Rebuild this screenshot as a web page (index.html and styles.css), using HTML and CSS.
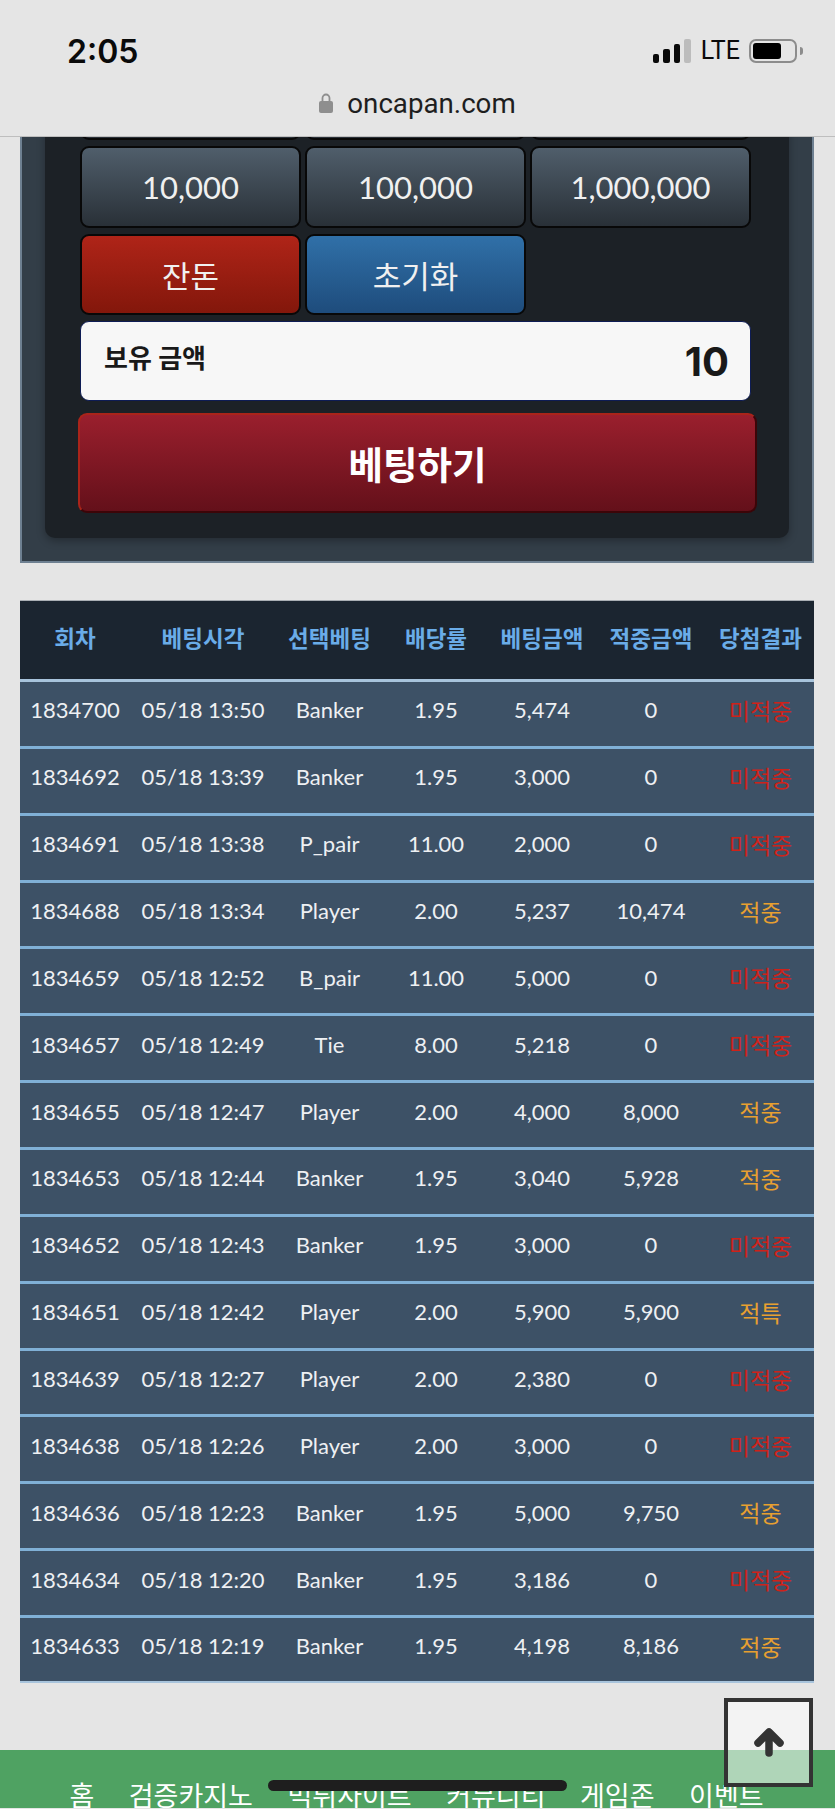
FILE: index.html
```html
<!DOCTYPE html>
<html lang="ko">

<head>
    <meta charset="UTF-8">
    <meta name="viewport" content="width=device-width, initial-scale=1.0">
    <title>oncapan.com</title>
    <link rel="stylesheet" href="styles.css">
</head>

<body>
    <header class="topbar">
        <div class="status">
            <span class="clock">2:05</span>
            <div class="status-right">
                <div class="signal">
                    <i class="bar-1"></i>
                    <i class="bar-2"></i>
                    <i class="bar-3"></i>
                    <i class="bar-4"></i>
                </div>
                <span class="lte">LTE</span>
                <div class="battery"><i></i></div>
                <div class="battery-nub"></div>
            </div>
        </div>
        <div class="address">
            <svg class="lock" viewBox="0 0 14 20" width="14" height="20">
                <path d="M3.5 9V5a3.5 3.5 0 0 1 7 0v4" fill="none" stroke="#8e8e8e" stroke-width="1.8" />
                <rect x="0" y="8" width="14" height="12" rx="2" fill="#8e8e8e" />
            </svg>
            <span>oncapan.com</span>
        </div>
    </header>

    <main class="page">
        <section class="bet-panel">
            <div class="bet-inner">
                <div class="amounts">
                    <button class="btn"></button>
                    <button class="btn"></button>
                    <button class="btn"></button>
                    <button class="btn">10,000</button>
                    <button class="btn">100,000</button>
                    <button class="btn">1,000,000</button>
                    <button class="btn btn-red">잔돈</button>
                    <button class="btn btn-blue">초기화</button>
                </div>
                <div class="balance">
                    <span class="balance-label">보유 금액</span>
                    <span class="balance-value">10</span>
                </div>
                <button class="bet-submit">베팅하기</button>
            </div>
        </section>

        <table class="history">
            <colgroup>
                <col class="c1">
                <col class="c2">
                <col class="c3">
                <col class="c4">
                <col class="c5">
                <col class="c6">
                <col class="c7">
            </colgroup>
            <thead>
                <tr>
                    <th>회차</th>
                    <th>베팅시각</th>
                    <th>선택베팅</th>
                    <th>배당률</th>
                    <th>베팅금액</th>
                    <th>적중금액</th>
                    <th>당첨결과</th>
                </tr>
            </thead>
            <tbody>
                <tr><td>1834700</td><td>05/18 13:50</td><td>Banker</td><td>1.95</td><td>5,474</td><td>0</td><td class="lose">미적중</td></tr>
                <tr><td>1834692</td><td>05/18 13:39</td><td>Banker</td><td>1.95</td><td>3,000</td><td>0</td><td class="lose">미적중</td></tr>
                <tr><td>1834691</td><td>05/18 13:38</td><td>P_pair</td><td>11.00</td><td>2,000</td><td>0</td><td class="lose">미적중</td></tr>
                <tr><td>1834688</td><td>05/18 13:34</td><td>Player</td><td>2.00</td><td>5,237</td><td>10,474</td><td class="win">적중</td></tr>
                <tr><td>1834659</td><td>05/18 12:52</td><td>B_pair</td><td>11.00</td><td>5,000</td><td>0</td><td class="lose">미적중</td></tr>
                <tr><td>1834657</td><td>05/18 12:49</td><td>Tie</td><td>8.00</td><td>5,218</td><td>0</td><td class="lose">미적중</td></tr>
                <tr><td>1834655</td><td>05/18 12:47</td><td>Player</td><td>2.00</td><td>4,000</td><td>8,000</td><td class="win">적중</td></tr>
                <tr><td>1834653</td><td>05/18 12:44</td><td>Banker</td><td>1.95</td><td>3,040</td><td>5,928</td><td class="win">적중</td></tr>
                <tr><td>1834652</td><td>05/18 12:43</td><td>Banker</td><td>1.95</td><td>3,000</td><td>0</td><td class="lose">미적중</td></tr>
                <tr><td>1834651</td><td>05/18 12:42</td><td>Player</td><td>2.00</td><td>5,900</td><td>5,900</td><td class="win">적특</td></tr>
                <tr><td>1834639</td><td>05/18 12:27</td><td>Player</td><td>2.00</td><td>2,380</td><td>0</td><td class="lose">미적중</td></tr>
                <tr><td>1834638</td><td>05/18 12:26</td><td>Player</td><td>2.00</td><td>3,000</td><td>0</td><td class="lose">미적중</td></tr>
                <tr><td>1834636</td><td>05/18 12:23</td><td>Banker</td><td>1.95</td><td>5,000</td><td>9,750</td><td class="win">적중</td></tr>
                <tr><td>1834634</td><td>05/18 12:20</td><td>Banker</td><td>1.95</td><td>3,186</td><td>0</td><td class="lose">미적중</td></tr>
                <tr><td>1834633</td><td>05/18 12:19</td><td>Banker</td><td>1.95</td><td>4,198</td><td>8,186</td><td class="win">적중</td></tr>
            </tbody>
        </table>
    </main>

    <footer class="site-footer">
        <a>홈</a>
        <a>검증카지노</a>
        <a>먹튀사이트</a>
        <a>커뮤니티</a>
        <a>게임존</a>
        <a>이벤트</a>
    </footer>

    <a class="to-top">
        <svg viewBox="0 0 30 30" width="30" height="30">
            <path d="M15 25V5M4 15L15 4L26 15" fill="none" stroke="#333" stroke-width="7.5" stroke-linecap="round" stroke-linejoin="round" />
        </svg>
    </a>
    <div class="home-indicator"></div>
</body>

</html>
```

FILE: styles.css
```css
* {
    box-sizing: border-box;
}

html,
body {
    height: 1809px;
    overflow: hidden;
}

body {
    margin: 0;
    background: rgb(229, 229, 229);
    color: rgb(255, 255, 255);
    font-family: Lato, 'Noto Sans CJK KR', sans-serif;
    display: flex;
    flex-direction: column;
}

/* browser chrome on top of the scrolled page */
.topbar {
    position: fixed;
    top: 0;
    left: 0;
    right: 0;
    height: 137px;
    background: rgb(229, 229, 229);
    border-bottom: 1px solid rgb(190, 190, 190);
    color: rgb(10, 10, 10);
    z-index: 5;
}

.status {
    height: 77px;
    padding: 31px 32px 0 67px;
    display: flex;
    justify-content: space-between;
    align-items: flex-start;
}

.clock {
    font-family: Inter, sans-serif;
    font-size: 32px;
    font-weight: 600;
    line-height: 42px;
}

.status-right {
    display: flex;
    align-items: flex-end;
    padding-top: 8px;
    height: 32px;
}

.signal {
    display: flex;
    align-items: flex-end;
    gap: 4px;
    margin-right: 10px;
}

.signal i {
    display: block;
    width: 6.5px;
    border-radius: 2px;
    background: rgb(10, 10, 10);
}

.signal .bar-1 {
    height: 9px;
}

.signal .bar-2 {
    height: 14px;
}

.signal .bar-3 {
    height: 19px;
}

.signal .bar-4 {
    height: 24px;
    background: rgb(188, 188, 188);
}

.lte {
    font-family: Roboto, sans-serif;
    font-size: 25px;
    line-height: 24px;
    margin-right: 9px;
}

.battery {
    width: 48px;
    height: 24px;
    border: 2px solid rgb(140, 140, 140);
    border-radius: 7px;
    padding: 2px;
}

.battery i {
    display: block;
    width: 28px;
    height: 16px;
    border-radius: 3px;
    background: rgb(0, 0, 0);
}

.battery-nub {
    width: 3px;
    height: 8px;
    margin: 0 0 8px 3px;
    background: rgb(140, 140, 140);
    border-radius: 0 3px 3px 0;
}

.address {
    display: flex;
    justify-content: center;
    align-items: center;
    gap: 14px;
    height: 52px;
    font-family: Roboto, sans-serif;
    font-size: 27.7px;
    color: rgb(30, 30, 30);
}

.page {
    padding: 0 21px 0 20px;
    flex: none;
}

.bet-panel {
    background: rgb(51, 62, 72);
    border-bottom: 2px solid rgb(110, 128, 145);
    border-right: 2px solid rgb(110, 128, 145);
    border-left: 2px solid rgb(110, 128, 145);
    padding: 0 23px 23px 23px;
}

.bet-inner {
    background: rgb(28, 33, 38);
    border-radius: 0 0 10px 10px;
    box-shadow: 0 3px 8px rgba(0, 0, 0, 0.3);
    padding: 58.5px 38px 25px 35px;
}

.amounts {
    display: grid;
    grid-template-columns: repeat(3, 1fr);
    grid-auto-rows: 81.5px;
    gap: 6px 4px;
}

.btn {
    font-family: inherit;
    font-size: 31px;
    font-weight: 400;
    color: rgb(240, 240, 240);
    border: 2px solid rgb(8, 8, 8);
    border-radius: 9px;
    background: linear-gradient(rgb(80, 94, 107), rgb(41, 48, 55));
    padding: 0;
}

.btn-red {
    background: linear-gradient(rgb(175, 36, 24), rgb(131, 23, 11));
}

.btn-blue {
    background: linear-gradient(rgb(48, 112, 168), rgb(30, 76, 124));
}

.balance {
    margin-top: 6px;
    height: 80px;
    background: rgb(247, 247, 247);
    border: 1px solid rgb(14, 28, 84);
    border-radius: 9px;
    color: rgb(25, 25, 25);
    padding: 0 21px 0 23px;
    display: flex;
    justify-content: space-between;
    align-items: center;
}

.balance-label {
    font-size: 26px;
    font-weight: 700;
    margin-bottom: 10px;
}

.balance-value {
    font-family: Inter, sans-serif;
    font-size: 40px;
    font-weight: 700;
}

.bet-submit {
    display: block;
    width: 679px;
    height: 100px;
    margin: 12px 0 0 -2px;
    font-family: inherit;
    font-size: 37.5px;
    font-weight: 700;
    color: rgb(255, 255, 255);
    background: linear-gradient(rgb(154, 31, 45), rgb(100, 16, 26));
    border: 2px solid rgb(60, 5, 8);
    border-top-color: rgb(170, 36, 26);
    border-left-color: rgb(170, 36, 26);
    border-radius: 9px;
    padding: 0 0 2px;
}

.history {
    margin-top: 37px;
    width: 794px;
    table-layout: fixed;
    border-collapse: separate;
    border-spacing: 0;
}

.c1 {
    width: 110px;
}

.c2 {
    width: 146px;
}

.c3 {
    width: 107px;
}

.c4 {
    width: 106px;
}

.c5 {
    width: 106px;
}

.c6 {
    width: 112px;
}

.c7 {
    width: 107px;
}

.history th {
    height: 82px;
    background: rgb(27, 37, 48);
    border-top: 1px solid rgb(170, 175, 180);
    border-bottom: 3px solid rgb(168, 196, 220);
    color: rgb(106, 172, 232);
    font-size: 22.5px;
    font-weight: 700;
    padding: 0 0 7px;
}

.history td {
    height: 66.86px;
    background: rgb(61, 81, 102);
    border-bottom: 3px solid rgb(128, 176, 214);
    color: rgb(238, 240, 243);
    font-size: 22px;
    font-weight: 400;
    text-align: center;
    padding: 0 0 8px;
}

.history tr:last-child td {
    border-bottom-color: rgb(168, 196, 220);
    height: 65px;
    border-bottom-width: 2px;
}

.history td.lose {
    color: rgb(206, 34, 26);
    font-size: 23px;
}

.history td.win {
    color: rgb(232, 160, 48);
    font-size: 23px;
}

.site-footer {
    margin-top: 67px;
    height: 58px;
    overflow: hidden;
    background: rgb(79, 162, 98);
    display: flex;
    justify-content: center;
    gap: 34.5px;
    padding: 26px 2px 0 0;
    font-size: 27px;
    font-weight: 400;
    line-height: 40px;
    flex: none;
}

.to-top {
    position: fixed;
    left: 724px;
    top: 1698px;
    width: 89px;
    height: 89px;
    border: 4px solid rgb(51, 51, 51);
    background: rgba(255, 255, 255, 0.55);
    display: flex;
    justify-content: center;
    padding-top: 26px;
    z-index: 6;
}

.home-indicator {
    position: fixed;
    left: 268px;
    top: 1780px;
    width: 299px;
    height: 11px;
    border-radius: 6px;
    background: rgb(30, 30, 30);
    z-index: 7;
}
```
